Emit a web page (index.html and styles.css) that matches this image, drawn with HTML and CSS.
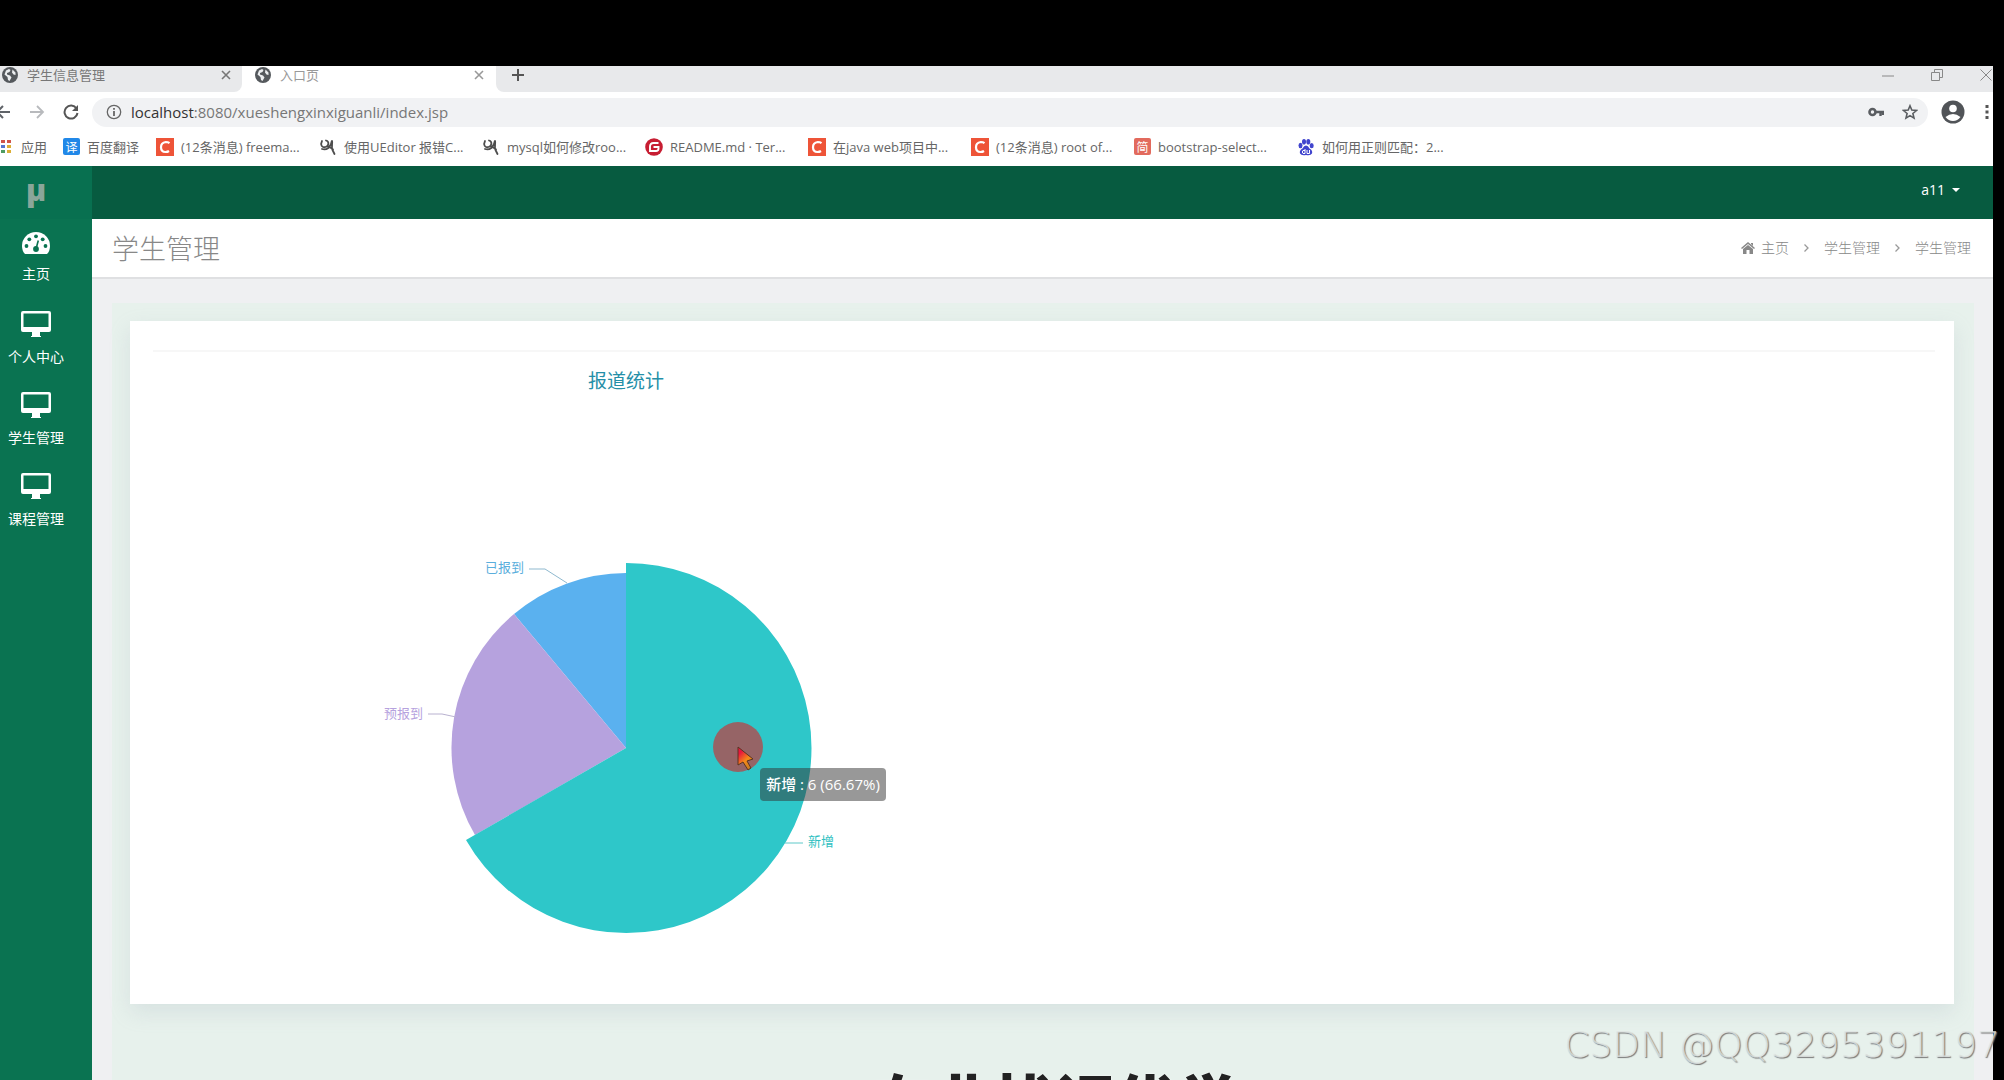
FILE: index.html
```html
<!DOCTYPE html>
<html lang="zh-CN">
<head>
<meta charset="utf-8">
<title>入口页</title>
<link rel="stylesheet" href="styles.css">
</head>
<body>
<svg class="defs" aria-hidden="true">
  <symbol id="globe" viewBox="0 0 16 16"><circle cx="8" cy="8" r="8" fill="#55595d"/><path d="M4 3.500l3-1.500 1.500 1-1 2-2.500 1 0 1.500 3 1 1.500 2-2 3.500-1.500-1-.5-3-3-2.500zM10.500 2.500l3 3 0 2.500-2-.5-1.500-2z" fill="#eceef0"/></symbol>
  <symbol id="cross" viewBox="0 0 10 10"><path d="M1 1l8 8M9 1l-8 8" fill="none" stroke="currentColor" stroke-width="1.600"/></symbol>
  <symbol id="csdn" viewBox="0 0 18 18"><path d="M0 0h18v18H0z" fill="#ee5438"/><path d="M13.500 5.200Q12 4 9.800 4 5 4.500 5 9.300 5 14 9.500 14 11.500 14 13 13" fill="none" stroke="#fff" stroke-width="2.200"/></symbol>
  <symbol id="loop" viewBox="0 0 18 18"><path d="M3 3c-2 4 0 7 3.500 6C10 8 10.500 3.500 7 2.500M3 11c4.500 1.500 9-1.500 10-8.500 .8 3-1 7 .5 9.500l2 4M9 8.500q3 1 5 3" fill="none" stroke="#4d4d4d" stroke-width="1.800" stroke-linecap="round"/></symbol>
  <symbol id="desktop" viewBox="0 0 30 26"><path fill="#fff" fill-rule="evenodd" d="M2 0h26q2 0 2 2v17q0 2-2 2h-9v4h1v1H10v-1h1v-4H2q-2 0-2-2V2q0-2 2-2zM2.500 2.500v13.500h25V2.500z"/></symbol>
</svg>

<div class="browser">
  <div class="tabs">
    <div class="tab"><svg class="i16"><use href="#globe"/></svg><span>学生信息管理</span><button class="plain" aria-label="关闭"><svg class="i10"><use href="#cross"/></svg></button></div>
    <div class="tab active"><svg class="i16"><use href="#globe"/></svg><span>入口页</span><button class="plain" aria-label="关闭"><svg class="i10"><use href="#cross"/></svg></button></div>
    <div class="strip">
      <button class="plain" aria-label="新标签页"><svg class="i14" viewBox="0 0 14 14"><path d="M7 1v12M1 7h12" stroke="#555" stroke-width="2"/></svg></button>
      <div class="window">
        <button class="plain" aria-label="最小化"><svg class="i12" viewBox="0 0 12 12"><path d="M0 7h12" stroke="#888"/></svg></button>
        <button class="plain" aria-label="还原"><svg class="i12" viewBox="0 0 12 12"><path d="M.5 3.500h8v8h-8zM3.500 3.500v-3h8v8h-3" fill="none" stroke="#888"/></svg></button>
        <button class="plain" aria-label="关闭窗口"><svg class="i12" viewBox="0 0 12 12"><path d="M.5.5l11 11M11.500.5l-11 11" stroke="#888"/></svg></button>
      </div>
    </div>
  </div>

  <div class="toolbar">
    <div class="navigation">
      <button class="plain" aria-label="后退"><svg class="i16" viewBox="0 0 16 16"><path d="M15 8H2M8 2L2 8l6 6" fill="none" stroke="#5f6368" stroke-width="2"/></svg></button>
      <button class="plain" aria-label="前进"><svg class="i16" viewBox="0 0 16 16"><path d="M1 8h13M8 2l6 6-6 6" fill="none" stroke="#b8babd" stroke-width="1.800"/></svg></button>
      <button class="plain" aria-label="刷新"><svg class="i16" viewBox="0 0 16 16"><path d="M13.500 4.500A6.500 6.500 0 1 0 14.500 9" fill="none" stroke="#555" stroke-width="2"/><path d="M15 1v6H9z" fill="#555"/></svg></button>
    </div>
    <div class="omnibox">
      <svg class="i16" viewBox="0 0 16 16"><circle cx="8" cy="8" r="6.700" fill="none" stroke="#666" stroke-width="1.300"/><path d="M8 7v5M8 4v1.800" stroke="#666" stroke-width="1.800"/></svg>
      <div class="url"><b>localhost</b>:8080/xueshengxinxiguanli/index.jsp</div>
      <svg class="i16" viewBox="0 0 16 16"><circle cx="4.500" cy="8" r="3" fill="none" stroke="#5a5d61" stroke-width="2.600"/><path d="M7 8h9M12.500 8v4M15 8v3" stroke="#5a5d61" stroke-width="2.400"/></svg>
      <svg class="i16" viewBox="0 0 16 16"><path d="M8 1.800l1.800 4.300 4.700.4-3.600 3 1.100 4.600L8 11.600l-4 2.500 1.100-4.600-3.600-3 4.700-.4z" fill="none" stroke="#5a5d61" stroke-width="1.600"/></svg>
    </div>
    <button class="plain" aria-label="账户"><svg class="i24" viewBox="0 0 24 24"><circle cx="12" cy="12" r="11.500" fill="#515458"/><circle cx="12" cy="8.500" r="3.800" fill="#fff"/><path d="M4.500 17q7.500-6 15 0-3 4-7.500 4t-7.500-4z" fill="#fff"/></svg></button>
    <button class="plain" aria-label="菜单"><svg class="dots" viewBox="0 0 4 16"><path d="M.5 1h3v3h-3zM.5 6.500h3v3h-3zM.5 12h3v3h-3z" fill="#555"/></svg></button>
  </div>

  <nav class="bookmarks" aria-label="书签">
    <a class="apps" href="#"><svg class="appicon" viewBox="0 0 10 14"><path d="M0 0h4v3H0zM6 0h4v3H6z" fill="#d0564a"/><path d="M0 5h4v3H0z" fill="#5577cf"/><path d="M6 5h4v3H6zM6 10h4v3H6z" fill="#dcae35"/><path d="M0 10h4v3H0z" fill="#4f9c62"/></svg><span>应用</span></a>
    <a class="fanyi" href="#"><i class="badge blue">译</i><span>百度翻译</span></a>
    <a href="#"><svg class="i18"><use href="#csdn"/></svg><span>(12条消息) freema...</span></a>
    <a href="#"><svg class="i18"><use href="#loop"/></svg><span>使用UEditor 报错C...</span></a>
    <a href="#"><svg class="i18"><use href="#loop"/></svg><span>mysql如何修改roo...</span></a>
    <a href="#"><svg class="i18" viewBox="0 0 18 18"><circle cx="9" cy="9" r="8.800" fill="#c71d32"/><path d="M13.500 5H8.500Q5 5 5 8.500V13h6q2.500 0 2.500-2.500V9H8.500" fill="none" stroke="#fff" stroke-width="1.900"/></svg><span>README.md · Ter...</span></a>
    <a href="#"><svg class="i18"><use href="#csdn"/></svg><span>在java web项目中...</span></a>
    <a href="#"><svg class="i18"><use href="#csdn"/></svg><span>(12条消息) root of...</span></a>
    <a href="#"><i class="badge red">简</i><span>bootstrap-select...</span></a>
    <a href="#"><svg class="i18" viewBox="0 0 18 18"><g fill="#4145ce"><ellipse cx="3.500" cy="7.500" rx="2" ry="2.700"/><ellipse cx="7" cy="3.700" rx="2" ry="2.800"/><ellipse cx="11.300" cy="3.700" rx="2" ry="2.800"/><ellipse cx="14.700" cy="7.700" rx="2" ry="2.600"/><path d="M9 7.500q2 0 3.500 3 3.500 2 2.500 5-1.500 2.500-6 1.500-4.500 1-6-1.500-1-3 2.500-5Q7 7.500 9 7.500z"/></g><path d="M8 11v4.500H6q-1.500-1.500 0-3h2M10 12v3.500h2.500V12" fill="none" stroke="#fff"/></svg><span>如何用正则匹配：2...</span></a>
  </nav>

  <div class="app">
    <aside class="sidebar">
      <a class="logo" href="#">μ</a>
      <nav class="menu">
        <a href="#"><svg class="gauge" viewBox="0 0 28 22"><path d="M3 22q-3-3-3-8a14 14 0 0 1 28 0q0 5-3 8z" fill="#fff"/><g fill="#0a7351"><circle cx="4.500" cy="14" r="1.900"/><circle cx="7.300" cy="7.300" r="1.900"/><circle cx="14" cy="4.300" r="1.900"/><circle cx="20.700" cy="7.300" r="1.900"/><circle cx="23.500" cy="14" r="1.900"/><circle cx="14" cy="17" r="2.900"/></g><path d="M14 17l2.300-8.500" stroke="#0a7351" stroke-width="1.600"/></svg><span>主页</span></a>
        <a href="#"><svg class="desk"><use href="#desktop"/></svg><span>个人中心</span></a>
        <a href="#"><svg class="desk"><use href="#desktop"/></svg><span>学生管理</span></a>
        <a href="#"><svg class="desk"><use href="#desktop"/></svg><span>课程管理</span></a>
      </nav>
    </aside>
    <main class="main">
      <header class="topbar"><button class="plain user">a11 <i class="caret"></i></button></header>
      <div class="heading">
        <h1>学生管理</h1>
        <nav class="crumbs" aria-label="位置">
          <a href="#"><svg class="i14" viewBox="0 0 14 14"><path d="M7 1l7 6-1 1-6-5-6 5-1-1zM10 2h2v3l-2-2zM7 4l5 4v5H8.500V9h-3v4H2V8z" fill="#888"/></svg>主页</a>
          <svg class="sep" viewBox="0 0 5 8"><path d="M.5.5L4 4 .5 7.500" fill="none" stroke="#999" stroke-width="1.300"/></svg>
          <a href="#">学生管理</a>
          <svg class="sep" viewBox="0 0 5 8"><path d="M.5.5L4 4 .5 7.500" fill="none" stroke="#999" stroke-width="1.300"/></svg>
          <span>学生管理</span>
        </nav>
      </div>
      <section class="panel">
        <div class="card">
          <div class="chart">
            <svg class="pie" viewBox="0 0 946 600" role="img" aria-label="报道统计">
              <text class="title" x="473" y="36">报道统计</text>
              <path d="M473 396L361 262A175 175 0 0 1 473 221z" fill="#5ab1ef"/>
              <path d="M473 396L322 483A174 174 0 0 1 361 262z" fill="#b6a2de"/>
              <path d="M473 396V211A185 185 0 1 1 313 488z" fill="#2ec7c9"/>
              <path d="M376 217h16l22 14" fill="none" stroke="#8fb9cf"/>
              <path d="M275 362h14l14 3" fill="none" stroke="#b9b2d0"/>
              <path d="M632 491h18" fill="none" stroke="#5fc9c9"/>
              <text class="label blue-text" x="332" y="220">已报到</text>
              <text class="label purple-text" x="231" y="366">预报到</text>
              <text class="label teal-text" x="655" y="494">新增</text>
              <circle cx="585" cy="395" r="25" fill="#966466"/>
            </svg>
            <div class="tooltip">新增 : 6 (66.67%)</div>
            <svg class="pointer" viewBox="0 0 17 25"><defs><linearGradient id="flame" x1="0" y1="0" x2="0.600" y2="1"><stop offset=".25" stop-color="#e8173e"/><stop offset=".65" stop-color="#f58a18"/><stop offset="1" stop-color="#c77a20"/></linearGradient></defs><path d="M1 1v18l5-3 5 8 3-2-4-7 6-2z" fill="url(#flame)" stroke="#5a3422"/></svg>
          </div>
        </div>
      </section>
    </main>
  </div>
</div>
<div class="subtitle">在业扰误优学</div>
<div class="watermark">CSDN @QQ3295391197</div>
</body>
</html>
```
FILE: styles.css
```css
* { box-sizing: border-box; }
body {
  margin: 0;
  height: 100vh;
  padding: 66px 11px 0 0;
  overflow: hidden;
  position: relative;
  background: #000;
  font: 14px/20px "Open Sans", "Noto Sans CJK SC", sans-serif;
  color: #555;
}
a { color: inherit; text-decoration: none; }
svg { display: block; flex: none; }
.defs { position: absolute; width: 0; height: 0; }
.plain { border: 0; padding: 0; margin: 0; background: none; font: inherit; color: inherit; display: flex; align-items: center; }
.i10 { width: 10px; height: 10px; }
.i12 { width: 12px; height: 12px; }
.i14 { width: 14px; height: 14px; }
.i16 { width: 16px; height: 16px; }
.i18 { width: 18px; height: 18px; }
.i24 { width: 24px; height: 24px; }

.browser { height: 100%; display: flex; flex-direction: column; background: #fff; overflow: hidden; }

.tabs { display: flex; height: 26px; background: #fff; font-size: 13px; }
.tab { display: flex; align-items: center; gap: 9px; width: 242px; padding: 0 11px 8px 2px; background: #e8e9eb; border-bottom-right-radius: 8px; color: #777; }
.tab span { flex: 1; }
.tab.active { width: 254px; padding: 0 12px 8px 13px; background: #fff; color: #999; }
.strip { flex: 1; display: flex; justify-content: space-between; align-items: center; padding: 0 1px 8px 15px; background: #e8e9eb; border-bottom-left-radius: 8px; }
.window { display: flex; gap: 37px; }

.toolbar { display: flex; align-items: center; height: 40px; padding-right: 4px; }
.navigation { display: flex; gap: 18px; width: 97px; margin-left: -5px; }
.omnibox { flex: 1; display: flex; align-items: center; gap: 18px; height: 29px; padding: 0 10px 0 14px; border-radius: 15px; background: #f1f2f4; margin-right: 13px; }
.url { flex: 1; margin-left: -9px; font-size: 15px; color: #777; }
.url b { font-weight: 400; color: #333; }
.dots { width: 4px; height: 16px; margin-left: 20px; }

.bookmarks { display: flex; height: 34px; padding: 0 0 5px 1px; font-size: 13px; color: #666; }
.bookmarks a { display: flex; align-items: center; gap: 7px; width: 163px; white-space: nowrap; }
.bookmarks .apps { width: 62px; gap: 10px; }
.bookmarks .fanyi { width: 93px; }
.appicon { width: 10px; height: 14px; }
.badge { width: 17px; height: 17px; border-radius: 2px; font: 12px/17px "Noto Sans CJK SC", sans-serif; text-align: center; color: #fff; }
.blue { background: #2188e8; }
.red { background: #e26a5d; }

.app { flex: 1; display: flex; min-height: 0; }
.sidebar { width: 92px; background: #0a7351; }
.logo { display: block; height: 53px; padding-right: 20px; background: #087050; color: #8aa69a; font: 800 30px/48px "Open Sans", sans-serif; text-align: center; }
.menu a { display: flex; flex-direction: column; align-items: center; gap: 9px; height: 81px; padding: 13px 20px 0 0; color: #fff; font-family: "Noto Sans CJK SC", sans-serif; }
.gauge { width: 28px; height: 22px; }
.menu a:first-child { height: 79px; }
.desk { width: 30px; height: 26px; }

.main { flex: 1; min-width: 0; display: flex; flex-direction: column; background: #eff0f2; }
.topbar { display: flex; justify-content: flex-end; height: 53px; padding: 0 33px 6px; background: #075b40; color: #fff; }
.user { gap: 7px; }
.caret { border: 4px solid transparent; border-top-color: #fff; border-bottom: 0; }
.heading { display: flex; justify-content: space-between; align-items: center; height: 60px; padding: 0 22px 0 20px; background: #fff; border-bottom: 2px solid #dfe0e2; color: #888; }
h1 { margin: 0; font: 300 27px/40px "Noto Sans CJK SC", sans-serif; }
.crumbs { display: flex; align-items: center; gap: 15px; font-weight: 300; }
.crumbs a { display: flex; align-items: center; gap: 6px; }
.sep { width: 5px; height: 8px; }

.panel { flex: 1 0 auto; margin: 24px 19px 0 20px; padding: 18px 20px 75px 18px; background: #e7f1ec; }
.card { padding: 29px 19px 52px 23px; background: #fff; box-shadow: 0 8px 20px rgba(150, 165, 180, .2); }
.chart { position: relative; border-top: 2px solid #f7f7f7; }
.pie { width: 946px; height: 600px; font-family: "Noto Sans CJK SC", sans-serif; }
.title { font-size: 19px; fill: #258fa8; text-anchor: middle; }
.label { font-size: 13px; }
.blue-text { fill: #5aaedc; }
.purple-text { fill: #b6a2de; }
.teal-text { fill: #2ebfc1; }
.tooltip { position: absolute; left: 607px; top: 416px; width: 126px; height: 33px; border-radius: 4px; background: rgba(50, 50, 50, .5); color: #fff; font-size: 15px; font-weight: 500; line-height: 33px; text-align: center; white-space: nowrap; }
.pointer { position: absolute; left: 584px; top: 394px; width: 17px; height: 25px; }

.subtitle { position: absolute; left: 0; right: 0; top: 1069px; padding-left: 106px; font: 900 61px/61px "Noto Sans CJK SC", sans-serif; text-align: center; color: #222; text-shadow: 0 0 2px #fff; }
.watermark { position: absolute; right: 4px; bottom: 15px; font: 200 36px/40px "DejaVu Sans", sans-serif; color: rgba(225, 230, 228, .8); text-shadow: 1px 1px 1px #777; }
```
